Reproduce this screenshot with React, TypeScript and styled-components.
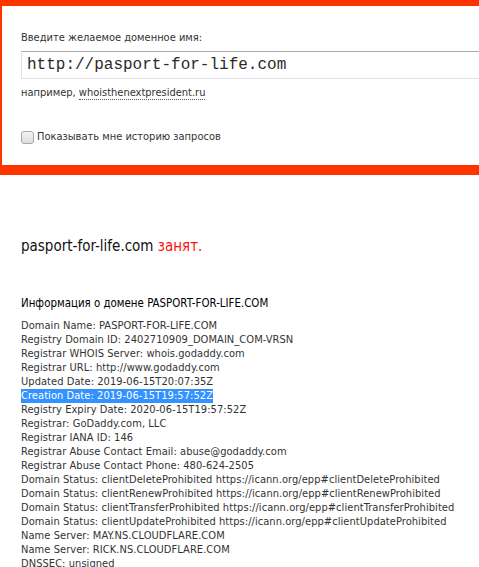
import React from "react";
import styled, { createGlobalStyle } from "styled-components";

const Global = createGlobalStyle`
  html, body { margin: 0; padding: 0; background: #fff; }
  body { font-family: "DejaVu Sans Condensed", "DejaVu Sans", sans-serif; font-size: 11px; color: #333; overflow: hidden; }
`;

const SearchBox = styled.form`
  border-top: 6px solid #ff3300;
  border-left: 2px solid #ff3300;
  border-bottom: 10px solid #ff3300;
  padding: 25px 0 21px 19px;
  display: flex;
  flex-direction: column;
`;

const Label = styled.label`
  line-height: 13px;
  color: #333;
`;

const DomainInput = styled.input`
  margin-top: 7px;
  height: 28px;
  box-sizing: border-box;
  width: calc(100% + 20px);
  border: 1px solid #e0e0e6;
  border-top-color: #a8a8a8;
  border-right: 0;
  padding: 0 0 0 5px;
  font-family: "Liberation Mono", "Courier New", monospace;
  font-size: 16px;
  color: #2a2a2a;
  outline: none;
  background: #fff;
`;

const Hint = styled.div`
  margin-top: 7px;
  line-height: 13px;
  color: #333;
`;

const DottedLink = styled.span`
  border-bottom: 1px dotted #555;
  color: #333;
`;

const CheckRow = styled.label`
  margin-top: 31px;
  display: flex;
  align-items: center;
  gap: 3px;
  line-height: 14px;
  color: #333;
`;

const Check = styled.input`
  appearance: none;
  margin: 0;
  width: 13px;
  height: 13px;
  box-sizing: border-box;
  border: 1px solid #a9a9a9;
  border-radius: 3px;
  background: linear-gradient(#f4f4f4, #dcdcdc);
  flex: none;
`;

const Result = styled.section`
  padding-left: 21px;
  display: flex;
  flex-direction: column;
`;

const Status = styled.h2`
  margin: 62px 0 0;
  font-weight: normal;
  font-size: 15px;
  line-height: 18px;
  color: #111;
`;

const Busy = styled.span`
  color: #ff1010;
`;

const InfoTitle = styled.h3`
  margin: 41px 0 0;
  font-weight: normal;
  font-size: 11.4px;
  line-height: 14px;
  color: #000;
`;

const Whois = styled.div`
  margin-top: 9px;
  display: flex;
  flex-direction: column;
  align-items: flex-start;
`;

const Line = styled.span<{ $selected?: boolean }>`
  line-height: 14px;
  white-space: nowrap;
  letter-spacing: 0.06px;
  color: ${(p) => (p.$selected ? "#fff" : "#333")};
  background: ${(p) => (p.$selected ? "#3392ff" : "transparent")};
`;

const lines = [
  "Domain Name: PASPORT-FOR-LIFE.COM",
  "Registry Domain ID: 2402710909_DOMAIN_COM-VRSN",
  "Registrar WHOIS Server: whois.godaddy.com",
  "Registrar URL: http://www.godaddy.com",
  "Updated Date: 2019-06-15T20:07:35Z",
  "Creation Date: 2019-06-15T19:57:52Z",
  "Registry Expiry Date: 2020-06-15T19:57:52Z",
  "Registrar: GoDaddy.com, LLC",
  "Registrar IANA ID: 146",
  "Registrar Abuse Contact Email: abuse@godaddy.com",
  "Registrar Abuse Contact Phone: 480-624-2505",
  "Domain Status: clientDeleteProhibited https://icann.org/epp#clientDeleteProhibited",
  "Domain Status: clientRenewProhibited https://icann.org/epp#clientRenewProhibited",
  "Domain Status: clientTransferProhibited https://icann.org/epp#clientTransferProhibited",
  "Domain Status: clientUpdateProhibited https://icann.org/epp#clientUpdateProhibited",
  "Name Server: MAY.NS.CLOUDFLARE.COM",
  "Name Server: RICK.NS.CLOUDFLARE.COM",
  "DNSSEC: unsigned",
];

export default function App() {
  return (
    <>
      <Global />
      <SearchBox onSubmit={(e) => e.preventDefault()}>
        <Label htmlFor="domain">Введите желаемое доменное имя:</Label>
        <DomainInput id="domain" defaultValue="http://pasport-for-life.com" />
        <Hint>
          например, <DottedLink>whoisthenextpresident.ru</DottedLink>
        </Hint>
        <CheckRow>
          <Check type="checkbox" />
          Показывать мне историю запросов
        </CheckRow>
      </SearchBox>
      <Result>
        <Status>
          pasport-for-life.com <Busy>занят.</Busy>
        </Status>
        <InfoTitle>Информация о домене PASPORT-FOR-LIFE.COM</InfoTitle>
        <Whois>
          {lines.map((l) => (
            <Line key={l} $selected={l.startsWith("Creation")}>
              {l}
            </Line>
          ))}
        </Whois>
      </Result>
    </>
  );
}
